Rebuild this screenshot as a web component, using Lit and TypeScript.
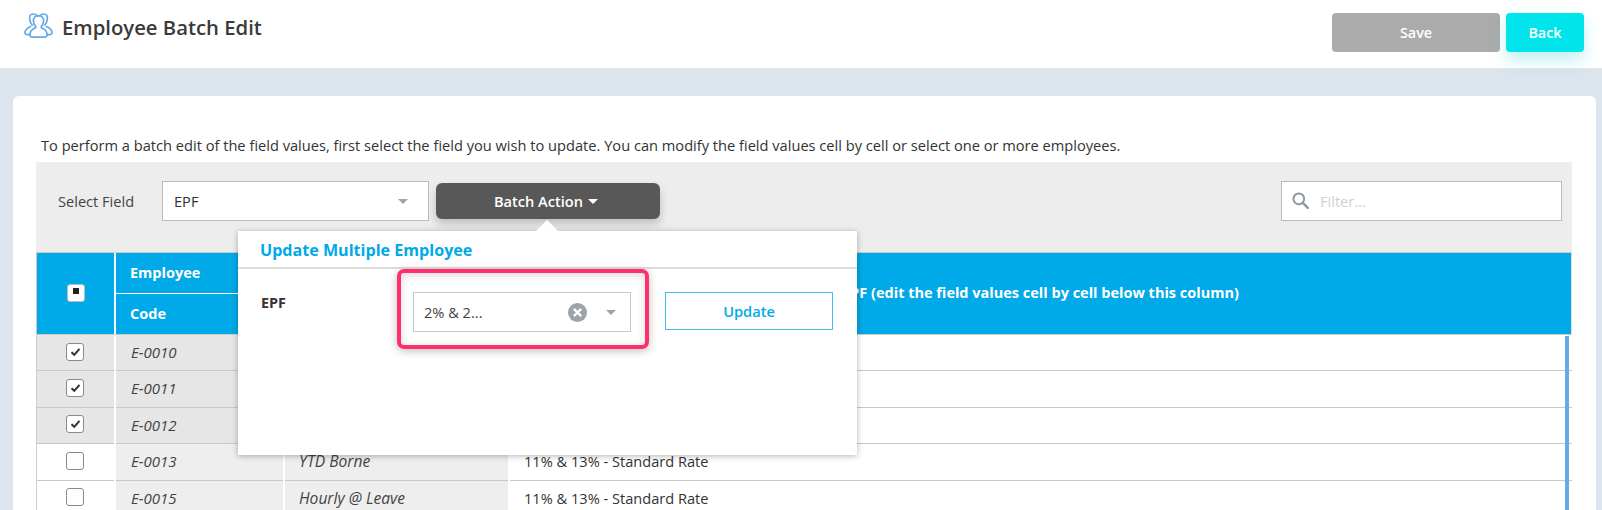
import { LitElement, html, css, svg } from "lit";
import { customElement } from "lit/decorators.js";

const usersIcon = svg`<g fill="none" stroke="#66a9e6" stroke-width="1.7" stroke-linejoin="round" stroke-linecap="round">
  <path d="M8.200 12C5.600 9.500 3.600 1 9 1c2 0 3.400.7 4.400 2"/>
  <path d="M20.800 12C23.400 9.500 25.400 1 20 1c-2 0-3.400.7-4.400 2"/>
  <path d="M6.600 13.400C4 14.600 1.500 16.200 1 19c-.2 1.500.5 2.600 2 2.600h2.400"/>
  <path d="M22.400 13.400c2.600 1.200 5.100 2.800 5.600 5.600.2 1.500-.5 2.600-2 2.600h-2.400"/>
  <path d="M14.500 2.600c-3.300 0-5.400 2.400-5.100 5.600.2 2.200.9 4 2.300 5.200v1.400C8.600 15.900 6.600 17.600 6 20.600c-.4 2.200.6 3.600 2.400 3.600h12.200c1.800 0 2.800-1.400 2.400-3.600-.6-3-2.600-4.700-5.700-5.800v-1.400c1.400-1.200 2.100-3 2.300-5.200.3-3.200-1.800-5.600-5.100-5.600z"/>
</g>`;

const searchIcon = svg`<g fill="none" stroke="#8b99a6" stroke-width="2"><circle cx="6.800" cy="6.800" r="5.400"/><path d="M10.800 10.800l5 5" stroke-width="2.400" stroke-linecap="round"/></g>`;

const checkIcon = svg`<path d="M1.500 5.200l2.800 2.600 5.200-6" fill="none" stroke="#333" stroke-width="2"/>`;

interface Row {
  code: string;
  name: string;
  epf: string;
  checked: boolean;
}

const ROWS: Row[] = [
  { code: "E-0010", name: "", epf: "", checked: true },
  { code: "E-0011", name: "", epf: "", checked: true },
  { code: "E-0012", name: "", epf: "", checked: true },
  { code: "E-0013", name: "YTD Borne", epf: "11% & 13% - Standard Rate", checked: false },
  { code: "E-0015", name: "Hourly @ Leave", epf: "11% & 13% - Standard Rate", checked: false },
];

@customElement("app-root")
export class AppRoot extends LitElement {
  static styles = css`
    :host {
      display: block;
      height: 510px;
      overflow: hidden;
      background: #dce4ed;
      font-family: "Open Sans", "Noto Sans", sans-serif;
      font-size: 14.6px;
      color: #333;
    }
    * { box-sizing: border-box; }
    .topbar {
      height: 69px;
      background: #fff;
      border-bottom: 1px solid #e3e8ec;
      display: flex;
      align-items: flex-start;
      padding: 13px 18px 0 24px;
      position: relative;
    }
    .topbar .users { width: 29px; height: 26px; flex: none; }
    .topbar h1 {
      margin: 1px 0 0 9px;
      font-size: 20.3px;
      line-height: 26px;
      font-weight: 600;
      color: #3a3a3a;
      flex: 1;
    }
    .btn {
      height: 39px;
      border: 0;
      border-radius: 4px;
      font: 600 14.4px "Open Sans", sans-serif;
      color: #fff;
      display: flex;
      align-items: center;
      justify-content: center;
    }
    .save { width: 168px; background: #ababab; margin-right: 6px; }
    .back { width: 78px; background: #00e5eb; box-shadow: 0 8px 16px rgba(0, 200, 210, 0.25); }
    .card {
      margin: 27px 6px 0 13px;
      height: 420px;
      background: #fff;
      border-radius: 6px 6px 0 0;
      padding: 39px 24px 0 23px;
      position: relative;
    }
    .intro { margin: 0 0 0 5px; line-height: 20px; height: 27px; white-space: nowrap; color: #333; font-size: 14.64px; }
    .toolbar {
      height: 90px;
      background: #ededed;
      display: flex;
      align-items: flex-start;
      padding: 19px 10px 0 22px;
    }
    .label { width: 104px; line-height: 40px; color: #444; }
    .select {
      width: 267px;
      height: 40px;
      background: #fff;
      border: 1px solid #bbb;
      display: flex;
      align-items: center;
      padding: 0 20px 0 11px;
      justify-content: space-between;
    }
    .caret { width: 0; height: 0; border: 5px solid transparent; border-top: 5px solid #a0a4a8; border-bottom: 0; }
    .batch {
      width: 224px;
      height: 36px;
      margin: 2px 0 0 7px;
      padding-right: 4px;
      background: #585858;
      border-radius: 6px;
      color: #fff;
      font-weight: 600;
      display: flex;
      align-items: center;
      justify-content: center;
      gap: 5px;
      box-shadow: 0 5px 10px rgba(0, 0, 30, 0.2);
    }
    .batch .caret { border-top-color: #fff; }
    .filter {
      margin-left: auto;
      width: 281px;
      height: 40px;
      background: #fff;
      border: 1px solid #bbb;
      display: flex;
      align-items: center;
      padding-left: 10px;
      gap: 10px;
      color: #cdd0d4;
    }
    .filter svg { width: 18px; height: 18px; }
    .table { box-shadow: inset 1px 0 #ccc, inset -1px 0 #ddd; }
    .grid {
      display: grid;
      grid-template-columns: 78px 167px 223px 1fr;
      column-gap: 2px;
    }
    .head {
      height: 83px;
      border-top: 1px solid #ccc;
      border-bottom: 1px solid #ccc;
      margin-left: 1px;
      margin-right: 1px;
      font-size: 14.5px;
      grid-template-columns: 77px 167px 223px 1fr;
    }
    .head > div { background: #00a9e7; color: #fff; font-weight: 700; display: flex; align-items: center; padding-bottom: 2px; }
    .head .center { justify-content: center; }
    .head .stack { flex-direction: column; align-items: stretch; background: none; gap: 1px; padding-bottom: 0; }
    .stack span { flex: 1; background: #00a9e7; display: flex; align-items: center; padding: 0 0 2px 14px; }
    .row { height: 36.5px; }
    .row:nth-child(2) { height: 36px; }
    .row > div { border-bottom: 1px solid #c8c8c8; display: flex; align-items: center; background: #fff; padding-bottom: 2px; }
    .row > .sel { justify-content: center; box-shadow: inset 1px 0 #ccc; }
    .row.on > .sel, .row.on > .code, .row.on > .name { background: #e6e6e6; }
    .row > .code, .row > .name { background: #eee; font-style: italic; color: #444; padding-left: 15px; padding-bottom: 1px; }
    .row > .code { font-size: 15px; }
    .row > .name { font-size: 15.6px; padding-left: 14px; }
    .row > .epf { padding-left: 14px; padding-bottom: 1px; }
    .check {
      width: 18px;
      height: 18px;
      border: 1px solid #8a8a8a;
      border-radius: 3px;
      background: #fff;
      display: flex;
      align-items: center;
      justify-content: center;
    }
    .check svg { width: 11px; height: 10px; }
    .check.mixed { border-color: #bbb; }
    .check.mixed i { width: 6px; height: 6px; background: #222; display: block; margin-top: -3px; }
    .scroll { position: absolute; left: 1552px; top: 240px; width: 4px; height: 180px; background: #66a9e6; }
    .popup {
      position: absolute;
      left: 225px;
      top: 135px;
      width: 619px;
      height: 224px;
      background: #fff;
      box-shadow: 0 1px 6px rgba(0, 0, 0, 0.3);
      z-index: 2;
    }
    .popup::before {
      content: "";
      position: absolute;
      left: 298px;
      top: -11px;
      border: 11px solid transparent;
      border-top: 0;
      border-bottom-color: #fff;
    }
    .pop-head {
      height: 38px;
      border-bottom: 2px solid #ddd;
      padding-left: 22px;
      font-size: 16.1px;
      line-height: 38px;
      font-weight: 700;
      color: #00a9e7;
    }
    .pop-body { display: flex; align-items: flex-start; padding: 23px 23px 0 23px; }
    .pop-label { width: 152px; font-weight: 700; line-height: 22px; color: #333; font-size: 14.4px; }
    .pop-select {
      width: 218px;
      height: 40px;
      border: 1px solid #c8c8c8;
      display: flex;
      align-items: center;
      padding: 0 14px 0 10px;
      color: #444;
    }
    .pop-select .val { flex: 1; }
    .clear { width: 19px; height: 19px; margin-right: 19px; }
    .update {
      width: 168px;
      height: 38px;
      margin-left: 34px;
      border: 1.5px solid #3cbff0;
      color: #00a9e7;
      font-weight: 600;
      display: flex;
      align-items: center;
      justify-content: center;
    }
    .note {
      position: absolute;
      left: 159px;
      top: 38px;
      width: 252px;
      height: 80px;
      border: 4px solid #ff2e6c;
      border-radius: 7px;
      box-shadow: 0 2px 8px rgba(0, 0, 0, 0.25), inset 0 2px 8px rgba(0, 0, 0, 0.15);
      pointer-events: none;
    }
  `;

  render() {
    return html`
      <div class="topbar">
        <svg class="users" viewBox="0 0 29 26">${usersIcon}</svg>
        <h1>Employee Batch Edit</h1>
        <div class="btn save">Save</div>
        <div class="btn back">Back</div>
      </div>
      <div class="card">
        <p class="intro">To perform a batch edit of the field values, first select the field you wish to update. You can modify the field values cell by cell or select one or more employees.</p>
        <div class="toolbar">
          <div class="label">Select Field</div>
          <div class="select"><span>EPF</span><span class="caret"></span></div>
          <div class="batch">Batch Action <span class="caret"></span></div>
          <div class="filter"><svg viewBox="0 0 18 18">${searchIcon}</svg><span>Filter...</span></div>
        </div>
        <div class="table">
          <div class="grid head">
            <div class="center"><span class="check mixed"><i></i></span></div>
            <div class="stack"><span>Employee</span><span>Code</span></div>
            <div></div>
            <div class="center">EPF (edit the field values cell by cell below this column)</div>
          </div>
          ${ROWS.map(
            (r) => html`<div class="grid row ${r.checked ? "on" : ""}">
              <div class="sel">
                <span class="check">${r.checked ? html`<svg viewBox="0 0 11 10">${checkIcon}</svg>` : ""}</span>
              </div>
              <div class="code">${r.code}</div>
              <div class="name">${r.name}</div>
              <div class="epf">${r.epf}</div>
            </div>`
          )}
        </div>
        <div class="scroll"></div>
        <div class="popup">
          <div class="pop-head">Update Multiple Employee</div>
          <div class="pop-body">
            <div class="pop-label">EPF</div>
            <div class="pop-select">
              <span class="val">2% & 2...</span>
              <svg class="clear" viewBox="0 0 18 18">
                <circle cx="9" cy="9" r="9" fill="#9ea3a8"></circle>
                <path d="M5.500 5.500l7 7M12.500 5.500l-7 7" stroke="#fff" stroke-width="2.200"></path>
              </svg>
              <span class="caret"></span>
            </div>
            <div class="update">Update</div>
          </div>
          <div class="note"></div>
        </div>
      </div>
    `;
  }
}
